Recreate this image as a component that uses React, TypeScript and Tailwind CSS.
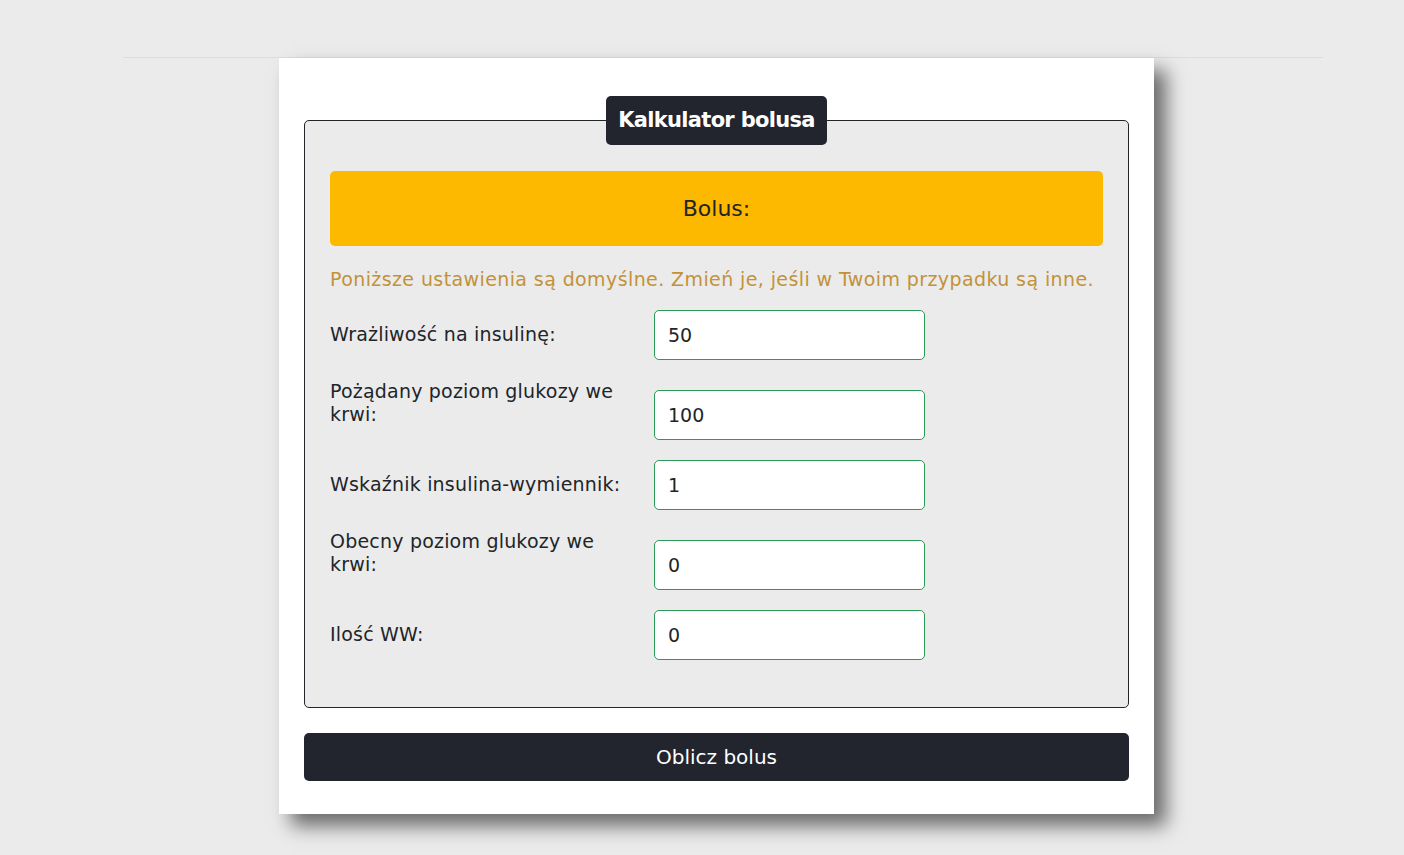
import { useState } from 'react'

const font = { fontFamily: '"DejaVu Sans", "Noto Sans", sans-serif' }

interface Field {
  label: string
  value: string
  twoLine?: boolean
}

const fields: Field[] = [
  { label: 'Wrażliwość na insulinę:', value: '50' },
  { label: 'Pożądany poziom glukozy we krwi:', value: '100', twoLine: true },
  { label: 'Wskaźnik insulina-wymiennik:', value: '1' },
  { label: 'Obecny poziom glukozy we krwi:', value: '0', twoLine: true },
  { label: 'Ilość WW:', value: '0' },
]

function FieldRow({ field }: { field: Field }) {
  const [value, setValue] = useState(field.value)
  return (
    <div className="flex items-start">
      <label
        className={`w-[324px] shrink-0 pr-[18px] text-[19px] leading-[23px] tracking-[0.2px] text-[#212529] ${field.twoLine ? 'pt-0' : 'pt-[13px]'}`}
      >
        {field.label}
      </label>
      <input
        value={value}
        onChange={(e) => setValue(e.target.value)}
        className={`h-[50px] w-[271px] rounded-[5px] border border-[#2a9a55] bg-white px-[13px] text-[19px] text-[#212529] outline-none ${field.twoLine ? 'mt-[10px]' : ''}`}
      />
    </div>
  )
}

export default function App() {
  return (
    <div className="min-h-[855px] bg-[#ebebeb]" style={font}>
      <div className="ml-[123px] h-[58px] w-[1200px] border-b border-[#dcdcdc]" />
      <div className="ml-[279px] w-[875px] bg-white px-[25px] pt-[38px] pb-[33px] shadow-[12px_12px_18px_rgba(0,0,0,0.55)]">
        <fieldset className="rounded-[5px] border border-[#212529] bg-[#ebebeb] px-[25px] pb-[47px]">
          <legend className="mx-auto rounded-[5px] bg-[#22252d] px-[12px] py-[9px] text-[21px] font-bold leading-[31px] tracking-[-0.7px] text-white">
            Kalkulator bolusa
          </legend>
          <div className="mt-[26px] flex h-[75px] items-center justify-center rounded-[5px] bg-[#fdb800] text-[22px] text-[#212529]">
            Bolus:
          </div>
          <p className="mt-[22px] text-[19px] leading-[23px] tracking-[0.4px] text-[#c2923a]">
            Poniższe ustawienia są domyślne. Zmień je, jeśli w Twoim przypadku są inne.
          </p>
          <div className="mt-[19px] flex flex-col gap-[20px]">
            {fields.map((f) => (
              <FieldRow key={f.label} field={f} />
            ))}
          </div>
        </fieldset>
        <button className="mt-[25px] h-[48px] w-full rounded-[5px] bg-[#22252d] text-[20px] text-white">
          Oblicz bolus
        </button>
      </div>
    </div>
  )
}
